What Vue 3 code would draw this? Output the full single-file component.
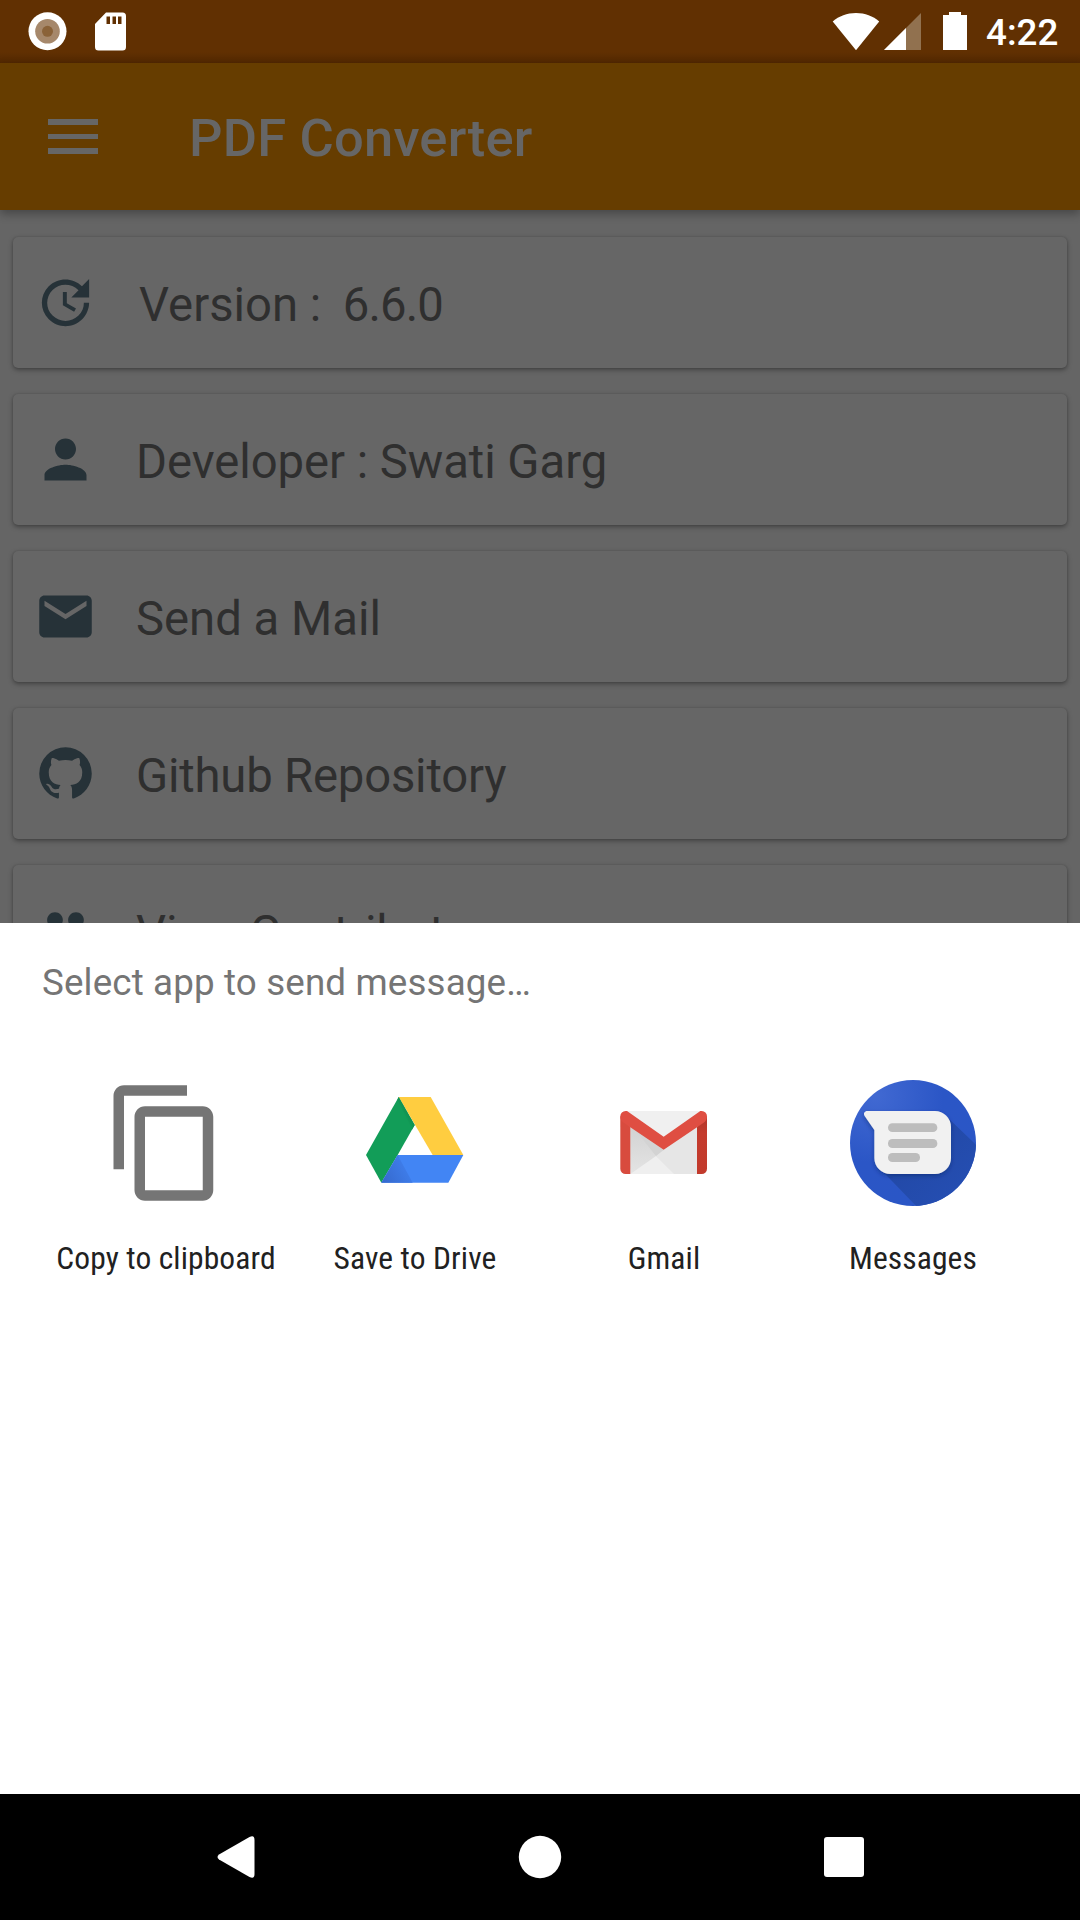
<script setup>
const rows = [
  {
    text: 'Version :',
    value: '\u00a0 6.6.0',
    indent: 3,
    tracking: 0,
    icon: 'M21 10.12h-6.78l2.74-2.82c-2.73-2.7-7.15-2.8-9.88-.1-2.73 2.71-2.73 7.08 0 9.79s7.15 2.71 9.88 0C18.32 15.65 19 14.08 19 12.1h2c0 1.98-.88 4.55-2.64 6.29-3.51 3.48-9.21 3.48-12.72 0-3.5-3.47-3.53-9.11-.02-12.58s9.14-3.47 12.65 0L21 3v7.12zM12.5 8v4.25l3.5 2.08-.72 1.21L11 13V8h1.5z',
  },
  {
    text: 'Developer : Swati Garg',
    indent: 0,
    tracking: -0.05,
    icon: 'M12 12c2.21 0 4-1.79 4-4s-1.79-4-4-4-4 1.79-4 4 1.79 4 4 4zm0 2c-2.67 0-8 1.34-8 4v2h16v-2c0-2.66-5.33-4-8-4z',
  },
  {
    text: 'Send a Mail',
    indent: 0,
    tracking: 0,
    icon: 'M20 4H4c-1.1 0-1.99.9-1.99 2L2 18c0 1.1.9 2 2 2h16c1.1 0 2-.9 2-2V6c0-1.1-.9-2-2-2zm0 4l-8 5-8-5V6l8 5 8-5v2z',
  },
  {
    text: 'Github Repository',
    indent: 0,
    tracking: -0.2,
    icon: 'M12,2A10,10 0 0,0 2,12C2,16.42 4.87,20.17 8.84,21.5C9.34,21.58 9.5,21.27 9.5,21C9.5,20.77 9.5,20.14 9.5,19.31C6.73,19.91 6.14,17.97 6.14,17.97C5.68,16.81 5.03,16.5 5.03,16.5C4.12,15.88 5.1,15.9 5.1,15.9C6.1,15.97 6.63,16.93 6.63,16.93C7.5,18.45 8.97,18 9.54,17.76C9.63,17.11 9.89,16.67 10.17,16.42C7.95,16.17 5.62,15.31 5.62,11.5C5.62,10.39 6,9.5 6.65,8.79C6.55,8.54 6.2,7.5 6.75,6.15C6.75,6.15 7.59,5.88 9.5,7.17C10.29,6.95 11.15,6.84 12,6.84C12.85,6.84 13.71,6.95 14.5,7.17C16.41,5.88 17.25,6.15 17.25,6.15C17.8,7.5 17.45,8.54 17.35,8.79C18,9.5 18.38,10.39 18.38,11.5C18.38,15.32 16.04,16.16 13.81,16.41C14.17,16.72 14.5,17.33 14.5,18.26C14.5,19.6 14.5,20.68 14.5,21C14.5,21.27 14.66,21.59 15.17,21.5C19.14,20.16 22,16.42 22,12A10,10 0 0,0 12,2Z',
  },
  {
    text: 'View Contributors',
    indent: 0,
    tracking: 0,
    icon: 'M16 11c1.66 0 2.99-1.34 2.99-3S17.66 5 16 5c-1.66 0-3 1.34-3 3s1.34 3 3 3zm-8 0c1.66 0 2.99-1.34 2.99-3S9.66 5 8 5C6.34 5 5 6.34 5 8s1.34 3 3 3zm0 2c-2.33 0-7 1.17-7 3.500V19h14v-2.500c0-2.330-4.670-3.500-7-3.500z',
  },
]
</script>

<template>
  <div class="screen">
    <header class="status">
      <svg class="status-left" width="140" height="63" viewBox="0 0 140 63">
        <circle cx="47.5" cy="31.300" r="19" fill="#fff" />
        <circle cx="47.5" cy="31.300" r="12.300" fill="#a6886b" />
        <circle cx="47.5" cy="31.300" r="5.500" fill="#8a6238" />
        <path fill="#fff" fill-rule="evenodd" d="M106 12.500H122.500a3.500 3.500 0 0 1 3.500 3.500V47a3.500 3.500 0 0 1-3.500 3.500H98.500A3.500 3.500 0 0 1 95 47V24zM106.500 16.500v7.500h3.500v-7.500zM112.500 16.500v7.500h3.500v-7.500zM118 16.500v7.500h3.500v-7.500z" />
      </svg>
      <svg class="status-right" width="145" height="63" viewBox="830 0 145 63">
        <path fill="#fff" d="M856 50.200L832.700 21.500C839 16 847 13 856 13s17 3 23.200 8.500z" />
        <path fill="#91714f" d="M921 13V50H884z" />
        <path fill="#fff" d="M906 28V50H884z" />
        <path fill="#fff" d="M949 12h12v3h6V50H943V15h6z" />
      </svg>
      <span class="clock">4:22</span>
    </header>

    <div class="appbar">
      <div class="menu"><i></i><i></i><i></i></div>
      <h1>PDF Converter</h1>
    </div>

    <main class="list">
      <div v-for="row in rows" :key="row.text" class="card">
        <svg width="63" height="63" viewBox="0 0 24 24"><path :d="row.icon" /></svg>
        <span :style="{ paddingLeft: row.indent + 'px', letterSpacing: row.tracking + 'px' }">{{ row.text }}<b v-if="row.value">{{ row.value }}</b></span>
      </div>
    </main>

    <section class="sheet">
      <p class="prompt">Select app to send message…</p>
      <div class="apps">
        <div class="app">
          <svg viewBox="0 0 24 24">
            <path fill="#757575" d="M16 1H4c-1.100 0-2 .9-2 2v14h2V3h12V1zm3 4H8c-1.100 0-2 .9-2 2v14c0 1.100.9 2 2 2h11c1.100 0 2-.9 2-2V7c0-1.100-.9-2-2-2zm0 16H8V7h11v14z" />
          </svg>
          <span>Copy to clipboard</span>
        </div>
        <div class="app">
          <svg viewBox="126 60 378 378">
            <defs>
              <linearGradient id="dg" x1="0" y1="1" x2="1" y2="0.500">
                <stop offset="0" stop-color="#3568cc" />
                <stop offset="1" stop-color="#4080ee" />
              </linearGradient>
              <linearGradient id="dk" gradientUnits="userSpaceOnUse" x1="298" y1="150" x2="278" y2="161">
                <stop offset="0" stop-color="#0f8a4b" />
                <stop offset="1" stop-color="#129d58" />
              </linearGradient>
            </defs>
            <path fill="#ffcd40" d="M266 111H362L460 285H368z" />
            <path fill="#129d58" d="M266 111L314 195L263 285L214 368L168 285z" />
            <path fill="url(#dk)" d="M266 111L314 195L306 209L262 120z" />
            <path fill="#4285f4" d="M263 285H460L415 368H214z" />
            <path fill="url(#dg)" d="M263 285L308 368H214z" />
          </svg>
          <span>Save to Drive</span>
        </div>
        <div class="app">
          <svg viewBox="93 60 378 378">
            <defs>
              <linearGradient id="gr" x1="0" y1="0" x2="0" y2="1">
                <stop offset="0" stop-color="#d2d2d2" />
                <stop offset="1" stop-color="#e4e4e4" />
              </linearGradient>
              <linearGradient id="gd" x1="0" y1="0" x2="0" y2="1">
                <stop offset="0" stop-color="#b0362a" />
                <stop offset="0.300" stop-color="#c43b2d" />
                <stop offset="1" stop-color="#c23a2c" />
              </linearGradient>
            </defs>
            <rect x="151" y="153" width="260" height="189" rx="16" fill="#f0f0f0" />
            <path fill="url(#gr)" d="M181 200L281 262L312 342H181z" />
            <path fill="#e6e6e6" d="M258 288L281 264L381 200V342H312z" />
            <path fill="#efefef" d="M181 342L258 288L312 342z" />
            <path fill="#d3d3d3" d="M190 203L258 288L281 270z" />
            <path fill="#d84b3e" d="M151 168V326a16 16 0 0 0 16 16H181V200z" />
            <path fill="url(#gd)" d="M411 168V326a16 16 0 0 1-16 16H381V200z" />
            <path fill="#df4e42" d="M167 153H171L281 230L391 153H395a16 16 0 0 1 16 16C411 178 408 184 401 188L281 269L161 188C154 184 151 178 151 169a16 16 0 0 1 16-16z" />
          </svg>
          <span>Gmail</span>
        </div>
        <div class="app">
          <svg viewBox="90 60 378 378">
            <defs>
              <radialGradient id="mb" cx="0.200" cy="0.120" r="0.900">
                <stop offset="0" stop-color="#4169d2" />
                <stop offset="0.600" stop-color="#2b56c6" />
                <stop offset="1" stop-color="#2a56c6" />
              </radialGradient>
              <linearGradient id="ms" x1="0" y1="0" x2="1" y2="1">
                <stop offset="0" stop-color="#20459f" />
                <stop offset="1" stop-color="#2650b6" />
              </linearGradient>
              <clipPath id="mc"><circle cx="279" cy="249" r="189" /></clipPath>
              <filter id="mf" x="-20%" y="-20%" width="140%" height="140%">
                <feDropShadow dx="0" dy="6" stdDeviation="6" flood-color="#0d2560" flood-opacity="0.450" />
              </filter>
            </defs>
            <circle cx="279" cy="249" r="189" fill="url(#mb)" />
            <path clip-path="url(#mc)" fill="url(#ms)" d="M378 168L480 266V450H300L178 324z" />
            <path filter="url(#mf)" fill="#f1f1f1" d="M142 153H345a48 48 0 0 1 48 48V294a48 48 0 0 1-48 48H211a48 48 0 0 1-48-48V210L134 168C129 160 134 153 142 153z" />
            <g fill="#bdbdbd">
              <rect x="204" y="190" width="148" height="26" rx="13" />
              <rect x="204" y="237" width="148" height="27" rx="13" />
              <rect x="204" y="279" width="96" height="27" rx="13" />
            </g>
          </svg>
          <span>Messages</span>
        </div>
      </div>
    </section>

    <nav class="nav">
      <svg width="1080" height="126" viewBox="0 1794 1080 126" fill="#fff">
        <path d="M219 1854.500L249.500 1837Q254.500 1834.500 254.500 1840V1874Q254.500 1879.500 249.500 1877L219 1859.500Q216 1857 219 1854.500z" />
        <circle cx="540" cy="1857" r="21.200" />
        <rect x="824" y="1837" width="40" height="40" rx="3" />
      </svg>
    </nav>
  </div>
</template>

<style>
body {
  margin: 0;
}
</style>

<style scoped>
.screen {
  width: 1080px;
  height: 1920px;
  display: flex;
  flex-direction: column;
  overflow: hidden;
  background: #656565;
  font-family: Roboto, 'Noto Sans', sans-serif;
}
.status {
  flex: none;
  height: 63px;
  display: flex;
  align-items: center;
  background: linear-gradient(#613002 52px, #522802 63px);
}
.status-right {
  margin-left: auto;
}
.clock {
  width: 95px;
  margin-right: 10px;
  text-indent: 11px;
  padding-top: 3px;
  color: #fff;
  font-size: 36.750px;
  font-weight: 500;
  line-height: 60px;
}
.appbar {
  flex: none;
  height: 147px;
  display: flex;
  align-items: center;
  background: #663d00;
  box-shadow: 0 4px 9px rgba(0, 0, 0, 0.300);
}
.menu {
  width: 50px;
  height: 34.300px;
  margin-left: 48px;
  display: flex;
  flex-direction: column;
  justify-content: space-between;
}
.menu i {
  height: 5.700px;
  background: #666;
}
h1 {
  margin: 2px 0 0 91px;
  color: #666;
  font-size: 52.500px;
  font-weight: 500;
  line-height: 62px;
  letter-spacing: 0.200px;
}
.list {
  flex: none;
  box-sizing: border-box;
  height: 713px;
  padding: 27px 13px 0;
  display: flex;
  flex-direction: column;
  gap: 26px;
  overflow: hidden;
}
.card {
  flex: none;
  box-sizing: border-box;
  height: 131px;
  padding-left: 21px;
  display: flex;
  align-items: center;
  border-radius: 5px;
  background: #666;
  box-shadow: 0 2px 5px rgba(0, 0, 0, 0.350), 0 0 2px rgba(0, 0, 0, 0.150);
}
.card svg {
  flex: none;
  fill: #263238;
}
.card span {
  margin-left: 39px;
  padding-top: 4px;
  color: #2f2f2f;
  font-size: 47.250px;
  line-height: 56px;
  white-space: pre;
}
.card b {
  font-weight: 400;
  letter-spacing: -0.900px;
}
.sheet {
  flex: 1;
  background: #fff;
}
.prompt {
  margin: 38px 0 0 42px;
  color: #757575;
  font-size: 36.750px;
  line-height: 43px;
  letter-spacing: 0.140px;
}
.apps {
  width: 996px;
  margin: 76px 0 0 41.500px;
  display: flex;
}
.app {
  width: 249px;
  display: flex;
  flex-direction: column;
  align-items: center;
}
.app svg {
  width: 126px;
  height: 126px;
}
.app span {
  margin-top: 34px;
  color: #212121;
  font-family: 'Roboto Condensed', Roboto, sans-serif;
  font-size: 31.500px;
  line-height: 37px;
  letter-spacing: 0.120px;
  white-space: nowrap;
}
.nav {
  flex: none;
  height: 126px;
  background: #000;
}
</style>
